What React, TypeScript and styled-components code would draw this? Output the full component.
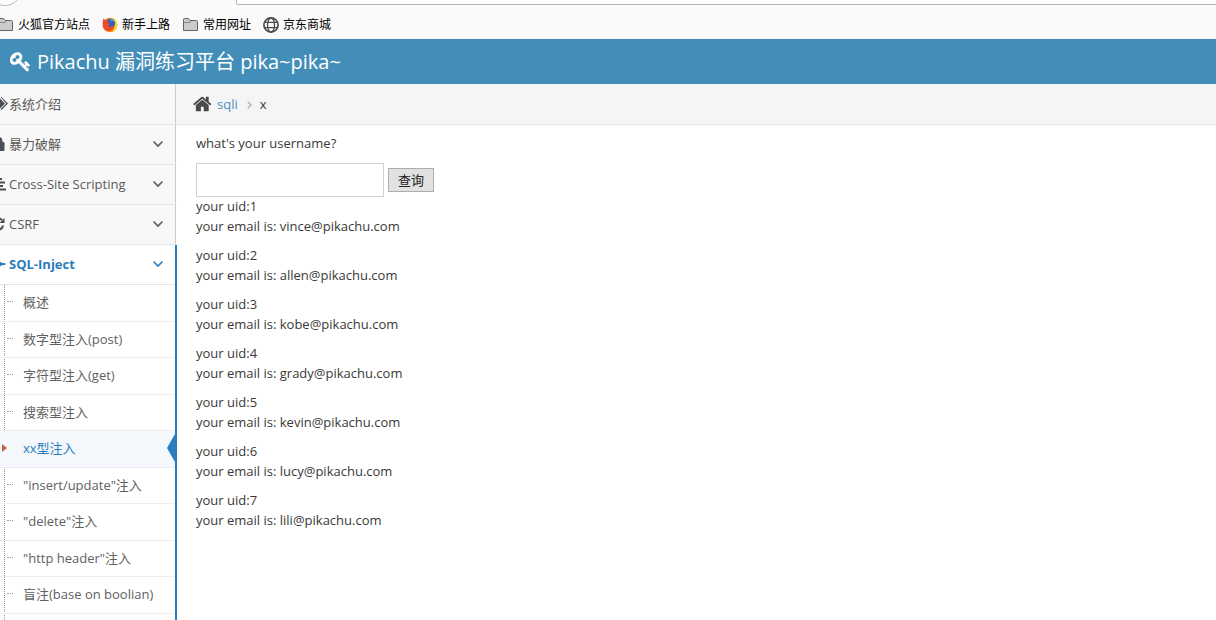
import React from 'react';
import styled, { createGlobalStyle, css } from 'styled-components';

const GlobalStyle = createGlobalStyle`
  *, *::before, *::after { box-sizing: border-box; }
  body {
    margin: 0;
    overflow: hidden;
    background: #fff;
    color: #393939;
    font: 13px/20px "Open Sans", "Noto Sans CJK SC", sans-serif;
  }
  a { color: inherit; text-decoration: none; }
  ul, ol { margin: 0; padding: 0; list-style: none; }
`;

const Page = styled.div`
  display: flex;
  flex-direction: column;
  height: 100vh;
`;

const BrowserBar = styled.div`
  position: relative;
  flex: none;
  height: 39px;
  padding-top: 15px;
  overflow: hidden;
  background: #fafafa;
`;

const BackButton = styled.span`
  position: absolute;
  top: -28px;
  left: -12px;
  width: 34px;
  height: 34px;
  border: 1px solid #b8b8b8;
  border-radius: 50%;
  background: #fdfdfd;
`;

const AddressBar = styled.span`
  position: absolute;
  top: -20px;
  left: 236px;
  right: -4px;
  height: 25px;
  border: 1px solid #b4b4b4;
  border-radius: 2px;
  background: #fff;
`;

const Bookmarks = styled.nav`
  display: flex;
  gap: 12px;
  margin-left: -3px;
`;

const Bookmark = styled.a`
  display: flex;
  align-items: center;
  gap: 4px;
  font-size: 12px;
  white-space: nowrap;
  color: #000;
  svg { flex: none; }
`;

const Navbar = styled.header`
  display: flex;
  flex: none;
  align-items: center;
  gap: 6px;
  height: 45px;
  padding: 0 10px;
  background: #438eb9;
  color: #fff;
`;

const Brand = styled.a`
  font-size: 20px;
  line-height: 44px;
`;

const Body = styled.div`
  display: flex;
  flex: 1;
  min-height: 0;
`;

const Sidebar = styled.nav`
  flex: none;
  width: 177px;
  overflow: hidden;
  background: linear-gradient(to right, #f2f2f2 175px, #ccc 175px, #ccc 176px, #fff 176px);
`;

const MenuLink = styled.a<{ $open?: boolean }>`
  display: flex;
  align-items: center;
  height: 39px;
  margin-right: 2px;
  padding: 0 11px 1px 0;
  background: #f8f8f8;
  color: #585858;
  ${p => p.$open && css`
    margin-right: 0;
    background: #fff;
    color: #2b7dbc;
    font-weight: 700;
  `}
`;

const MenuItem = styled.li<{ $open?: boolean }>`
  border-bottom: 1px solid #e5e5e5;
  &:first-child ${MenuLink} { height: 40px; }
  ${p => p.$open && css`
    border-right: 2px solid #2b7dbc;
    border-bottom: 0;
    background: #fff;
  `}
`;

const MenuIcon = styled.span`
  display: flex;
  flex: none;
  justify-content: center;
  width: 22px;
  margin-left: -13px;
  color: #4a4f55;
  ${MenuItem}:nth-child(5) & { color: #2b7dbc; }
`;

const MenuLabel = styled.span`
  flex: 1;
  white-space: nowrap;
`;

const Submenu = styled.ul`
  padding-bottom: 36px;
  border-top: 1px solid #e5e5e5;
  background: linear-gradient(#999 1px, transparent 1px) 4px 0 / 1px 2px repeat-y;
`;

const SubItem = styled.li<{ $active?: boolean }>`
  position: relative;
  height: 36px;
  border-bottom: 1px solid #eee;
  &:nth-child(odd) { height: 37px; }
  ${p => p.$active && css`background: #f4f7fb;`}
`;

const SubLink = styled.a<{ $active?: boolean }>`
  display: flex;
  align-items: center;
  gap: 10px;
  height: 33px;
  padding-left: 7px;
  white-space: nowrap;
  color: ${p => (p.$active ? '#2b7dbc' : '#616161')};
  &::before {
    content: "";
    width: 6px;
    border-top: 1px dotted ${p => (p.$active ? 'transparent' : '#9a9a9a')};
  }
`;

const Caret = styled.svg`
  position: absolute;
  top: 13px;
  left: 2px;
`;

const Pointer = styled.svg`
  position: absolute;
  top: 3px;
  right: 0;
`;

const Main = styled.main`
  flex: 1;
  min-width: 0;
`;

const Breadcrumb = styled.ol`
  display: flex;
  align-items: center;
  height: 41px;
  margin-left: -1px;
  padding-left: 17px;
  border-bottom: 1px solid #e5e5e5;
  background: #f5f5f5;
  li { display: flex; align-items: center; }
  a { display: flex; align-items: center; gap: 4px; color: #4c8fbd; }
`;

const Separator = styled.span`
  display: flex;
  padding: 2px 8px 0 9px;
`;

const Content = styled.div`
  padding: 8px 19px;
`;

const SearchForm = styled.form`
  display: flex;
  flex-wrap: wrap;
  align-items: center;
  column-gap: 4px;
  margin-bottom: -1px;
`;

const Question = styled.label`
  width: 100%;
  margin-bottom: 10px;
`;

const TextInput = styled.input`
  width: 188px;
  height: 34px;
  padding: 5px 4px;
  border: 1px solid #d0d0d0;
  font: inherit;
`;

const SubmitButton = styled.button`
  height: 24px;
  padding: 0 9px;
  border: 1px solid #adadad;
  background: #e1e1e1;
  color: #222;
  font: inherit;
  line-height: 20px;
`;

const Result = styled.p`
  margin: 0 0 9px;
`;

const glyphs = {
  home: 'M1408 992v480q0 26-19 45t-45 19h-384v-384h-256v384h-384q-26 0-45-19t-19-45v-480q0-1 .5-3t.5-3l575-474 575 474q1 2 1 6zm223-69l-62 74q-8 9-21 11h-3q-13 0-21-7l-692-577-692 577q-12 8-24 7-13-2-21-11l-62-74q-8-10-7-23.5t11-21.5l719-599q32-26 76-26t76 26l244 204v-195q0-14 9-23t23-9h192q14 0 23 9t9 23v408l219 182q10 8 11 21.5t-7 23.5z',
  key: 'M832 512q0-80-56-136t-136-56-136 56-56 136q0 42 19 83-41-19-83-19-80 0-136 56t-56 136 56 136 136 56 136-56 56-136q0-42-19-83 41 19 83 19 80 0 136-56t56-136zm851 704q0 17-49 66t-66 49q-9 0-28.5-16t-36.5-33-38.5-40-24.5-26l-96 96 220 220q28 28 28 68 0 42-39 81t-81 39q-40 0-68-28l-671-671q-176 131-365 131-163 0-265.5-102.5t-102.5-265.5q0-160 95-313t248-248 313-95q163 0 265.5 102.5t102.5 265.5q0 189-131 365l355 355 96-96q-3-3-26-24.5t-40-38.5-33-36.5-16-28.5q0-17 49-66t66-49q13 0 23 10 6 6 46 44.5t82 79.5 86.5 86 73 78 28.5 41z',
};

interface GlyphProps {
  name: keyof typeof glyphs;
  size: number;
  color: string;
  weight?: number;
}

const Glyph = ({ name, size, color, weight = 0 }: GlyphProps) => (
  <svg width={size} height={size} viewBox="0 0 1792 1792" fill={color} stroke={color} strokeWidth={weight} aria-hidden="true">
    <path d={glyphs[name]} />
  </svg>
);

const FolderIcon = () => (
  <svg width="17" height="16" viewBox="0 0 17 16" aria-hidden="true">
    <path d="M1.500 13.500V2.500q0-1 1-1h4l1.500 2h6.500q1 0 1 1v9z" fill="#cbcbcb" stroke="#656565" />
    <path d="M2 5.500h6l1-1.500" fill="none" stroke="#888" />
  </svg>
);

const FirefoxIcon = () => (
  <svg width="16" height="16" viewBox="0 0 16 16" aria-hidden="true">
    <circle cx="8" cy="8" r="7.300" fill="#ff8a16" />
    <path d="M10 .5q5.500 2 5.500 7.800-.5 5.200-5.200 6.700 2.500-3 2-7.500Q12 3 10 .5z" fill="#ffd52e" />
    <circle cx="8.300" cy="6.500" r="4.800" fill="#2f62b8" />
    <path d="M8 2q3-.5 4.500 2.500-2-1-3 0z" fill="#35b5e5" />
    <path d="M1.500 1.500l2 2q2-.7 3.500.2Q5.500 5 6 6l2 .4q-.5 1.500-2 2 1 2 3.500 1.200Q12 9 12.500 8q0 4-3.500 5.500-4 1.500-7-1.500Q-.5 8 1.500 1.500z" fill="#ec4a28" />
  </svg>
);

const GlobeIcon = () => (
  <svg width="16" height="16" viewBox="0 0 16 16" fill="none" stroke="#4c4c4c" strokeWidth="1.300" aria-hidden="true">
    <circle cx="8" cy="8" r="7.100" strokeWidth="1.700" />
    <ellipse cx="8" cy="8" rx="3.500" ry="7" />
    <path d="M1.500 5.300h13M1.500 10.700h13" />
  </svg>
);

const TagsIcon = () => (
  <svg width="20" height="14" viewBox="0 0 20 14" fill="currentColor" aria-hidden="true">
    <path d="M0 0h10.500L17 6.500 10.500 13 0 6z" />
    <path d="M12.500 0h1L20 6.500 13.500 13l-1-.8L18.200 6.500z" />
  </svg>
);

const LockIcon = () => (
  <svg width="14" height="16" viewBox="0 0 14 16" aria-hidden="true">
    <path d="M3.500 8V5a3.500 3.500 0 0 1 7 0v3" fill="#4a4f55" stroke="currentColor" strokeWidth="2" />
    <rect x="0" y="6" width="13.500" height="9" rx="1" fill="currentColor" />
  </svg>
);

const LinesIcon = () => (
  <svg width="16" height="14" viewBox="0 0 16 14" fill="currentColor" aria-hidden="true">
    <path d="M0 1h12v2H0zM0 4.500h15v2H0zM0 8h13v2H0zM0 11.500h16v2H0z" />
  </svg>
);

const RefreshIcon = () => (
  <svg width="14" height="14" viewBox="0 0 14 14" aria-hidden="true">
    <path d="M2 5.500A5.200 5.200 0 0 1 11 3M12 8.500A5.200 5.200 0 0 1 3 11" fill="none" stroke="currentColor" strokeWidth="2" />
    <path d="M13.500 1v5h-5zM.5 13V8h5z" fill="currentColor" />
  </svg>
);

const JetIcon = () => (
  <svg width="16" height="14" viewBox="0 0 16 14" fill="currentColor" aria-hidden="true">
    <path d="M0 2h2l2 3h1V1h2l4 4.500 4 .7q1 .4 1 .8t-1 .8l-4 .7L7 13H5V9H4l-2 3H0z" />
  </svg>
);

const Chevron = () => (
  <svg width="12" height="8" viewBox="0 0 12 8" fill="none" stroke="currentColor" strokeWidth="1.600" aria-hidden="true">
    <path d="M1.500 1.500L6 6l4.500-4.500" />
  </svg>
);

const bookmarks = [
  { label: '火狐官方站点', Icon: FolderIcon },
  { label: '新手上路', Icon: FirefoxIcon },
  { label: '常用网址', Icon: FolderIcon },
  { label: '京东商城', Icon: GlobeIcon },
];

const menu = [
  { label: '系统介绍', Icon: TagsIcon, leaf: true },
  { label: '暴力破解', Icon: LockIcon },
  { label: 'Cross-Site Scripting', Icon: LinesIcon },
  { label: 'CSRF', Icon: RefreshIcon },
  { label: 'SQL-Inject', Icon: JetIcon, open: true },
];

const injections = [
  '概述',
  '数字型注入(post)',
  '字符型注入(get)',
  '搜索型注入',
  'xx型注入',
  '"insert/update"注入',
  '"delete"注入',
  '"http header"注入',
  '盲注(base on boolian)',
];

const users = ['vince', 'allen', 'kobe', 'grady', 'kevin', 'lucy', 'lili'];

export default function App() {
  return (
    <Page>
      <GlobalStyle />
      <BrowserBar>
        <BackButton />
        <AddressBar />
        <Bookmarks>
          {bookmarks.map(({ label, Icon }) => (
            <Bookmark key={label} href="#"><Icon />{label}</Bookmark>
          ))}
        </Bookmarks>
      </BrowserBar>
      <Navbar>
        <Glyph name="key" size={21} color="#fff" weight={50} />
        <Brand href="#">Pikachu 漏洞练习平台 pika~pika~</Brand>
      </Navbar>
      <Body>
        <Sidebar>
          <ul>
            {menu.map(({ label, Icon, leaf, open }) => (
              <MenuItem key={label} $open={open}>
                <MenuLink href="#" $open={open}>
                  <MenuIcon><Icon /></MenuIcon>
                  <MenuLabel>{label}</MenuLabel>
                  {!leaf && <Chevron />}
                </MenuLink>
                {open && (
                  <Submenu>
                    {injections.map(name => {
                      const active = name === 'xx型注入';
                      return (
                        <SubItem key={name} $active={active}>
                          <SubLink href="#" $active={active}>{name}</SubLink>
                          {active && (
                            <>
                              <Caret width="5" height="8" viewBox="0 0 5 8"><path d="M0 0l5 4-5 4z" fill="#c86139" /></Caret>
                              <Pointer width="8" height="28" viewBox="0 0 8 28"><path d="M8 0v28L0 14z" fill="#2b7dbc" /></Pointer>
                            </>
                          )}
                        </SubItem>
                      );
                    })}
                  </Submenu>
                )}
              </MenuItem>
            ))}
          </ul>
        </Sidebar>
        <Main>
          <Breadcrumb>
            <li>
              <a href="#"><Glyph name="home" size={20} color="#4a4a4a" />sqli</a>
              <Separator>
                <svg width="5" height="8" viewBox="0 0 5 8" fill="none" stroke="#b2b6bf" strokeWidth="1.500" aria-hidden="true">
                  <path d="M.8.8L4 4 .8 7.200" />
                </svg>
              </Separator>
            </li>
            <li>x</li>
          </Breadcrumb>
          <Content>
            <SearchForm onSubmit={e => e.preventDefault()}>
              <Question htmlFor="username">what's your username?</Question>
              <TextInput id="username" name="name" type="text" />
              <SubmitButton type="submit">查询</SubmitButton>
            </SearchForm>
            {users.map((user, i) => (
              <Result key={user}>
                your uid:{i + 1}
                <br />
                your email is: {user}@pikachu.com
              </Result>
            ))}
          </Content>
        </Main>
      </Body>
    </Page>
  );
}
